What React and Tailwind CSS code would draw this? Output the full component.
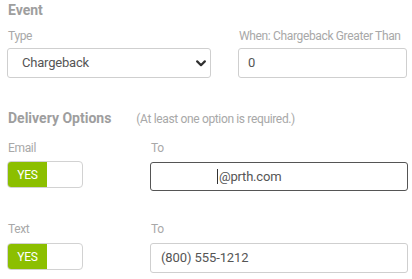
import React from 'react';

const Label = ({ children }) => (
    <div className="h-[16px] whitespace-nowrap pl-px text-[12px] leading-[16px] tracking-[-0.35px] text-[#a8a8a8]">{children}</div>
);

const Toggle = ({ className = '' }) => (
    <div className={`flex h-[27px] w-[76px] overflow-hidden rounded-[4px] border border-[#d2d2d2] bg-white ${className}`}>
        <div className="flex w-[39px] items-center justify-center bg-[#8cbf00] text-[12px] tracking-[-0.3px] text-white">YES</div>
    </div>
);

const ChevronDown = () => (
    <svg width="10" height="7" viewBox="0 0 10 7" fill="none">
        <path d="M1.2 1.4 L5 5.2 L8.8 1.4" stroke="#2f2f2f" strokeWidth="2.2" strokeLinecap="round" strokeLinejoin="round" />
    </svg>
);

const App = () => {
    return (
        <div className="h-[279px] w-[412px] overflow-hidden bg-white pl-[7px] font-['Roboto',sans-serif]">
            <h3 className="h-[20px] pl-px text-[14px] font-bold leading-[20px] text-[#9e9e9e]">Event</h3>

            <div className="mt-[8px] flex gap-[27px]">
                <div className="w-[204px]">
                    <Label>Type</Label>
                    <div className="mt-[4px] flex h-[30px] items-center justify-between rounded-[3px] border border-[#cfcfcf] pl-[14px] pr-[4px]">
                        <span className="text-[13px] tracking-[-0.2px] text-[#555]">Chargeback</span>
                        <ChevronDown />
                    </div>
                </div>
                <div className="w-[169px]">
                    <Label>When: Chargeback Greater Than</Label>
                    <div className="mt-[4px] flex h-[30px] items-center rounded-[3px] border border-[#cfcfcf] pl-[9px] text-[13px] text-[#555]">
                        0
                    </div>
                </div>
            </div>

            <div className="mt-[30px] flex h-[20px] items-baseline">
                <h3 className="pl-px text-[14px] font-bold leading-[20px] text-[#9e9e9e]">Delivery Options</h3>
                <span className="ml-[25px] text-[12px] tracking-[-0.35px] text-[#a8a8a8]">(At least one option is required.)</span>
            </div>

            {/* email */}
            <div className="mt-[12px] flex">
                <div className="w-[143px]">
                    <Label>Email</Label>
                    <Toggle className="mt-[5px]" />
                </div>
                <div className="w-[258px]">
                    <Label>To</Label>
                    <div className="mt-[6px] flex h-[29px] items-center rounded-[3px] border border-[#555] pl-[66px] text-[13px] tracking-[-0.2px] text-[#555]">
                        <span className="mr-px inline-block h-[15px] w-px bg-[#333]" />
                        @prth.com
                    </div>
                </div>
            </div>

            {/* text */}
            <div className="mt-[30px] flex">
                <div className="w-[143px]">
                    <Label>Text</Label>
                    <Toggle className="mt-[6px]" />
                </div>
                <div className="w-[258px]">
                    <Label>To</Label>
                    <div className="mt-[6px] flex h-[30px] items-center rounded-[3px] border border-[#cfcfcf] pl-[10px] text-[13px] tracking-[-0.1px] text-[#555]">
                        (800) 555-1212
                    </div>
                </div>
            </div>
        </div>
    );
};

export default App;
